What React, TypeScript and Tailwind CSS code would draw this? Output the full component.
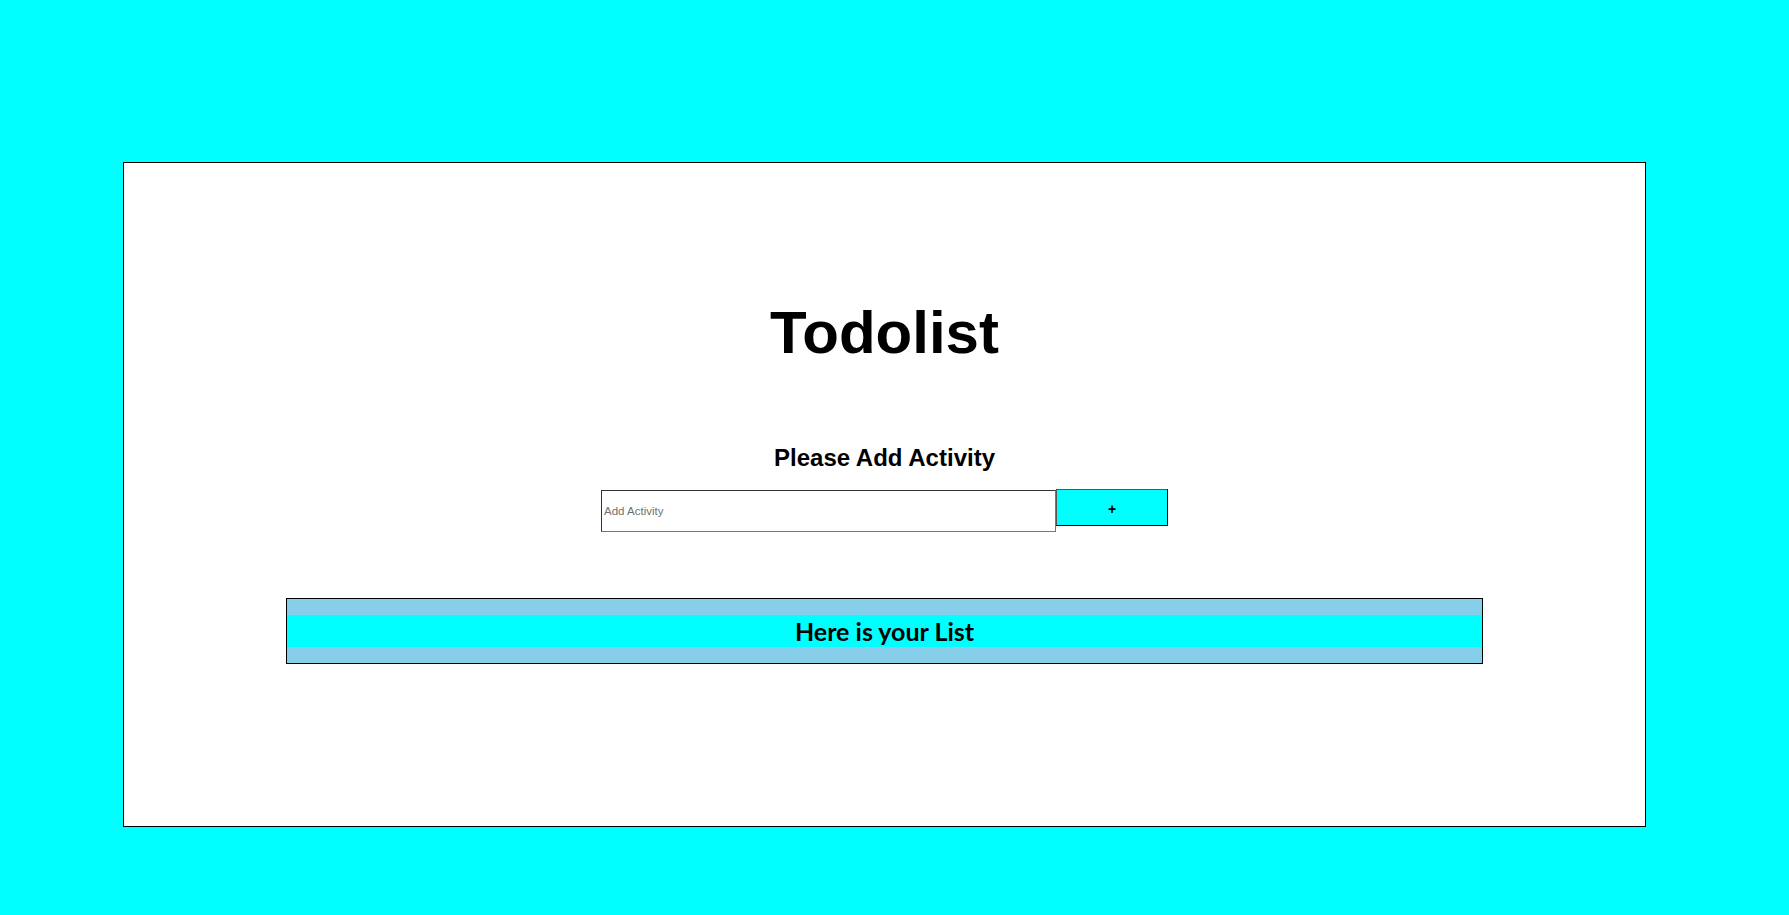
export default function App() {
  return (
    <div className="h-[915px] w-full overflow-hidden bg-[#00ffff] pt-[162px] pl-[123px]">
      <div className="flex h-[665px] w-[1523px] flex-col items-center border border-black bg-white">
        <h1 className="mt-[140px] font-['Liberation_Sans',Arial,sans-serif] text-[60px] leading-[60px] font-bold text-black">
          Todolist
        </h1>
        <h3 className="mt-[83px] font-['Liberation_Sans',Arial,sans-serif] text-[24px] leading-[24px] font-bold text-black">
          Please Add Activity
        </h3>
        <div className="mt-[19px] flex items-start">
          <input
            type="text"
            placeholder="Add Activity"
            className="mt-[1px] h-[42px] w-[455px] border border-t-[#333] border-r-[#777] border-b-[#777] border-l-[#333] bg-white px-[2px] font-['Liberation_Sans',Arial,sans-serif] text-[11.5px] text-black outline-none placeholder:text-[#6f6f6f]"
          />
          <button className="h-[37px] w-[112px] border border-t-[#555] border-r-black border-b-black border-l-[#555] bg-[#00ffff] pt-[4px] font-['Liberation_Sans',Arial,sans-serif] text-[14px] font-bold text-black">
            +
          </button>
        </div>
        <div className="mt-[66px] w-[1197px] border border-black bg-[#87ceeb] py-[16px]">
          <h2 className="flex h-[32px] items-center justify-center bg-[#00ffff] font-['Lato','Open_Sans',sans-serif] text-[25px] leading-[32px] font-bold text-black">
            Here is your List
          </h2>
        </div>
      </div>
    </div>
  );
}
